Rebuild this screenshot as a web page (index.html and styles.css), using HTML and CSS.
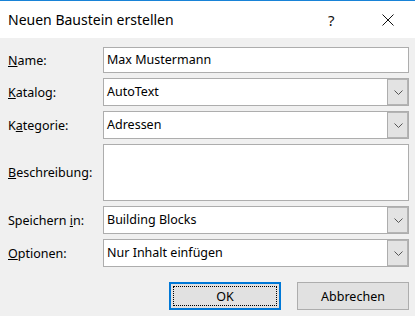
FILE: index.html
```html
<!DOCTYPE html>
<html>
  <head>
    <meta charset="UTF-8" />
    <title>Neuen Baustein erstellen</title>
    <link rel="stylesheet" href="styles.css">
  </head>

  <body>
    <div class="dialog">
      <div class="title-bar">
        <div class="title">Neuen Baustein erstellen</div>
        <div class="title-help">?</div>
        <div class="title-close">
          <svg width="12" height="12" viewBox="0 0 12 12">
            <path d="M0.5 0.5 L11.5 11.5 M11.5 0.5 L0.5 11.5" stroke="#111" stroke-width="1" fill="none" />
          </svg>
        </div>
      </div>

      <div class="form">
        <label class="field-label"><span><u>N</u>ame:</span></label>
        <div class="text-box">Max Mustermann</div>

        <label class="field-label"><span><u>K</u>atalog:</span></label>
        <div class="combo">
          <span class="combo-value">AutoText</span>
          <span class="combo-btn"><svg width="9" height="5" viewBox="0 0 9 5"><path d="M0.5 0.5 L4.5 4.5 L8.5 0.5" stroke="#555" fill="none" /></svg></span>
        </div>

        <label class="field-label"><span>K<u>a</u>tegorie:</span></label>
        <div class="combo">
          <span class="combo-value">Adressen</span>
          <span class="combo-btn"><svg width="9" height="5" viewBox="0 0 9 5"><path d="M0.5 0.5 L4.5 4.5 L8.5 0.5" stroke="#555" fill="none" /></svg></span>
        </div>

        <label class="field-label"><span><u>B</u>eschreibung:</span></label>
        <div class="text-area"></div>

        <label class="field-label"><span>Speichern <u>i</u>n:</span></label>
        <div class="combo">
          <span class="combo-value">Building Blocks</span>
          <span class="combo-btn"><svg width="9" height="5" viewBox="0 0 9 5"><path d="M0.5 0.5 L4.5 4.5 L8.5 0.5" stroke="#555" fill="none" /></svg></span>
        </div>

        <label class="field-label"><span><u>O</u>ptionen:</span></label>
        <div class="combo">
          <span class="combo-value">Nur Inhalt einfügen</span>
          <span class="combo-btn"><svg width="9" height="5" viewBox="0 0 9 5"><path d="M0.5 0.5 L4.5 4.5 L8.5 0.5" stroke="#555" fill="none" /></svg></span>
        </div>
      </div>

      <div class="button-row">
        <button class="btn btn-default"><span class="focus-rect">OK</span></button>
        <button class="btn">Abbrechen</button>
      </div>
    </div>
  </body>
</html>
```

FILE: styles.css
```css
body {
  margin: 0;
  padding: 0;
  font-family: "Noto Sans", "Open Sans", sans-serif;
  background: #f0f0f0;
}

.dialog {
  width: 415px;
  height: 316px;
  background: #f0f0f0;
  overflow: hidden;
}

.title-bar {
  display: flex;
  align-items: center;
  height: 37px;
  background: #ffffff;
  border-top: 1px solid #1883d7;
}

.title {
  flex: 1;
  padding-left: 8px;
  font-size: 14px;
  color: #000;
}

.title-help {
  width: 14px;
  font-size: 15px;
  color: #111;
  margin-right: 40px;
}

.title-close {
  width: 12px;
  height: 12px;
  margin-right: 21px;
}

.title-close svg {
  display: block;
}

.form {
  display: grid;
  grid-template-columns: 95px 306px;
  row-gap: 5px;
  padding: 9px 6px 0 8px;
}

.field-label {
  display: flex;
  align-items: center;
  font-size: 12.5px;
  color: #000;
}

.text-box,
.combo,
.text-area {
  box-sizing: border-box;
  background: #fff;
  border: 1px solid #adadad;
  font-size: 12.5px;
  color: #000;
}

.text-box {
  height: 26px;
  line-height: 24px;
  padding-left: 3px;
}

.text-area {
  height: 57px;
}

.combo {
  display: flex;
  height: 28px;
}

.combo-value {
  flex: 1;
  line-height: 26px;
  padding-left: 3px;
}

.combo-btn {
  width: 20px;
  display: flex;
  align-items: center;
  justify-content: center;
  background: #e3e3e3;
  border-left: 1px solid #adadad;
  box-shadow: inset -1px -1px 0 #b4b4b4, inset 0 1px 0 #b4b4b4;
}

.button-row {
  display: flex;
  gap: 16px;
  padding: 15px 0 0 169px;
}

.btn {
  box-sizing: border-box;
  width: 112px;
  height: 28px;
  padding: 0;
  background: #e1e1e1;
  border: 1px solid #adadad;
  font-family: "Noto Sans", "Open Sans", sans-serif;
  font-size: 12.5px;
  color: #000;
}

.btn-default {
  border: 2px solid #0078d7;
  padding: 2px;
}

.focus-rect {
  display: flex;
  align-items: center;
  justify-content: center;
  height: 100%;
  box-sizing: border-box;
  border: 1px dotted #000;
}
```
